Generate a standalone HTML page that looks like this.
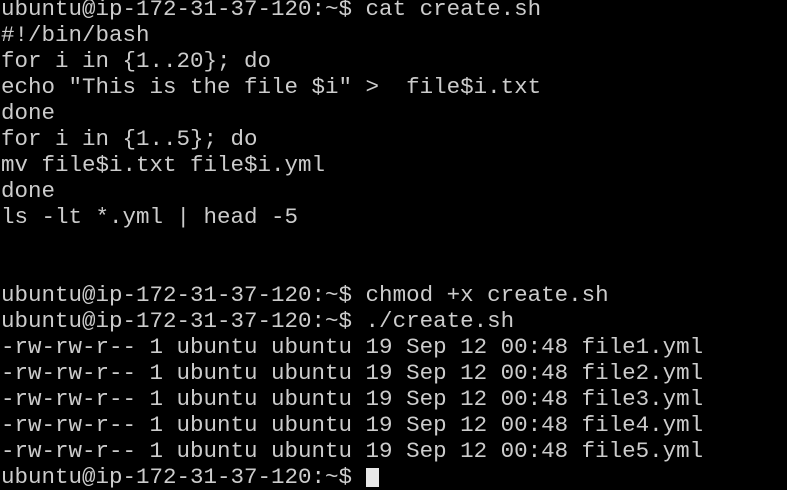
<!DOCTYPE html>
<html><head><style>
html,body{margin:0;padding:0;background:#000;width:787px;height:471px;overflow:hidden}
pre{margin:0;position:absolute;left:1px;top:-4px;font-family:"Liberation Mono",monospace;font-size:22.5px;line-height:26px;color:#cccccc;white-space:pre}
.cur{display:inline-block;width:13px;height:19px;background:#e8e8e8;vertical-align:-4px}
</style></head><body>
<pre>ubuntu@ip-172-31-37-120:~$ cat create.sh
#!/bin/bash
for i in {1..20}; do
echo "This is the file $i" &gt;  file$i.txt
done
for i in {1..5}; do
mv file$i.txt file$i.yml
done
ls -lt *.yml | head -5


ubuntu@ip-172-31-37-120:~$ chmod +x create.sh
ubuntu@ip-172-31-37-120:~$ ./create.sh
-rw-rw-r-- 1 ubuntu ubuntu 19 Sep 12 00:48 file1.yml
-rw-rw-r-- 1 ubuntu ubuntu 19 Sep 12 00:48 file2.yml
-rw-rw-r-- 1 ubuntu ubuntu 19 Sep 12 00:48 file3.yml
-rw-rw-r-- 1 ubuntu ubuntu 19 Sep 12 00:48 file4.yml
-rw-rw-r-- 1 ubuntu ubuntu 19 Sep 12 00:48 file5.yml
ubuntu@ip-172-31-37-120:~$ <span class="cur"></span></pre>
</body></html>
